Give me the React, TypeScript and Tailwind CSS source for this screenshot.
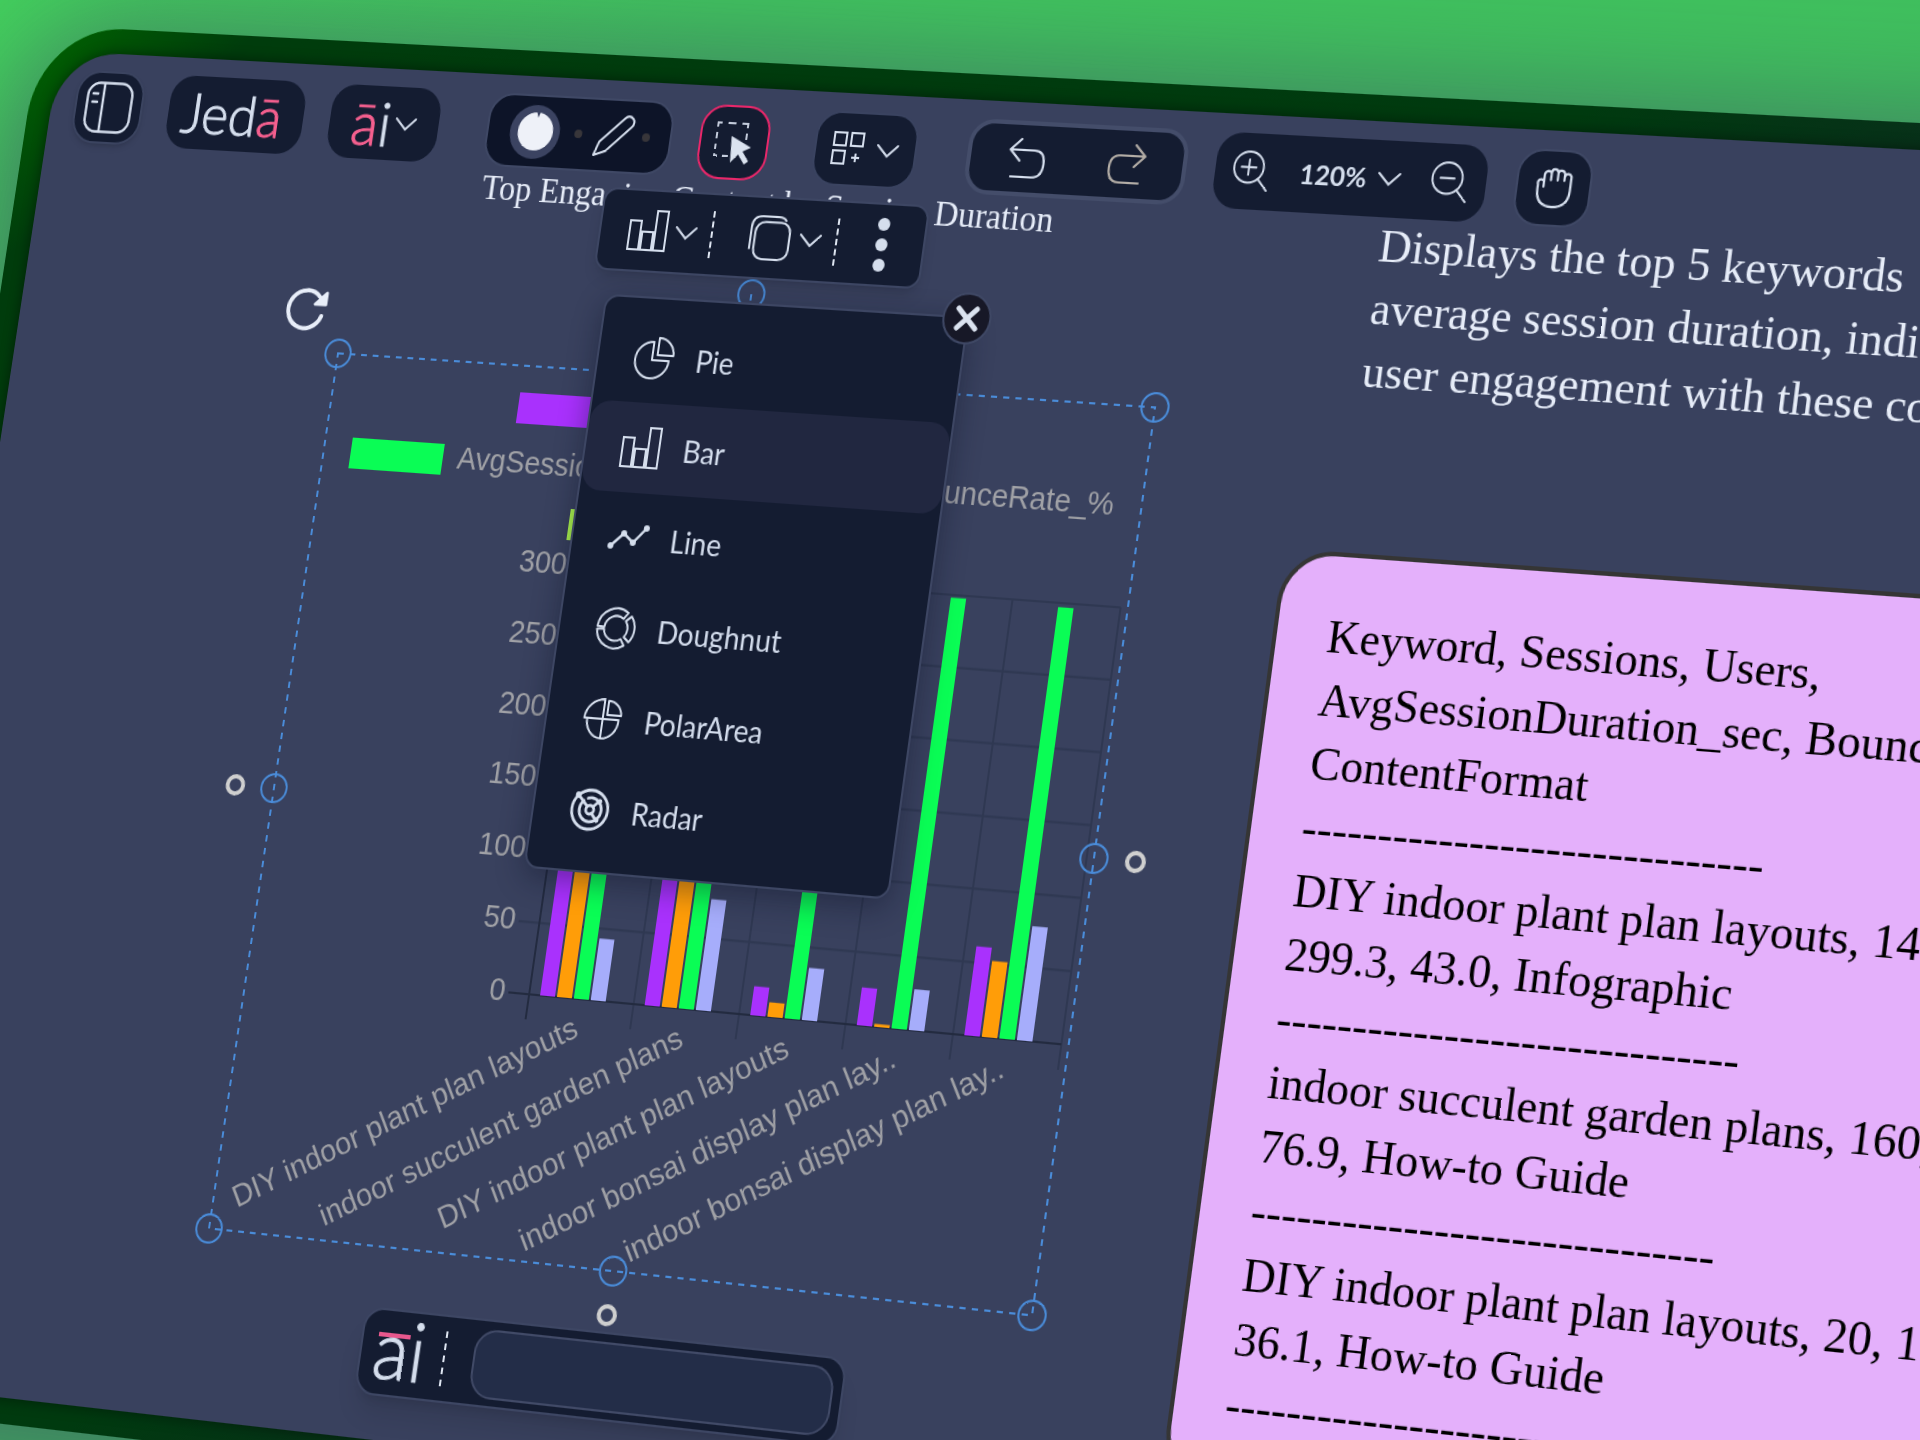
import type { ReactNode } from "react";

const SANS = "font-['Lato','Liberation_Sans',sans-serif]";
const SERIF = "font-['Liberation_Serif',serif]";
const LOGO = "leading-none font-light text-[#d5deed] [-webkit-text-stroke:1px_currentColor]";

/* ---------- icons ---------- */

function Chevron({ className = "w-[22px]" }: { className?: string }) {
  return (
    <svg viewBox="0 0 22 14" className={className} fill="none" stroke="#d5deed" strokeWidth="2" strokeLinecap="round" aria-hidden="true">
      <path d="M1 2 L11 12 L21 2" />
    </svg>
  );
}

function Icon({ children, className = "size-10", strokeWidth = 2 }: { children: ReactNode; className?: string; strokeWidth?: number }) {
  return (
    <svg viewBox="0 0 40 40" className={className} fill="none" stroke="#d5deed" strokeWidth={strokeWidth} strokeLinejoin="round" strokeLinecap="round" aria-hidden="true">
      {children}
    </svg>
  );
}

function SidebarIcon() {
  return (
    <svg viewBox="0 0 50 50" className="size-[50px]" fill="none" stroke="#d5deed" strokeWidth="2.5" strokeLinecap="round" aria-hidden="true">
      <rect x="1.5" y="1.5" width="47" height="47" rx="12" />
      <path d="M18 2 V48 M7 12 H12 M7 20 H12" />
    </svg>
  );
}

function PieIcon() {
  return (
    <Icon>
      <path d="M18 5 A17 17 0 1 0 35 22 H18 Z" />
      <path d="M23 1 A16 16 0 0 1 39 17 H23 Z" />
    </Icon>
  );
}

function BarIcon() {
  return (
    <Icon>
      <path strokeLinejoin="miter" d="M1 11 H12 V38 H1 Z M14 21 H25 V38 H14 Z M27 1 H38 V38 H27 Z" />
    </Icon>
  );
}

function LineIcon() {
  return (
    <Icon strokeWidth={2.5}>
      <path d="M3 28 L15 16 L25 24 L37 10" />
      <g fill="#d5deed" stroke="none">
        <circle cx="3" cy="28" r="3" />
        <circle cx="15" cy="16" r="3" />
        <circle cx="25" cy="24" r="3" />
        <circle cx="37" cy="10" r="3" />
      </g>
    </Icon>
  );
}

function ringSegment(from: number, to: number, cx = 20, cy = 20, outer = 18.5, inner = 11.5) {
  const at = (deg: number, r: number) => {
    const a = (deg * Math.PI) / 180;
    return `${(cx + r * Math.cos(a)).toFixed(2)} ${(cy + r * Math.sin(a)).toFixed(2)}`;
  };
  return `M${at(from, outer)} A${outer} ${outer} 0 0 1 ${at(to, outer)} L${at(to, inner)} A${inner} ${inner} 0 0 0 ${at(from, inner)} Z`;
}

function DoughnutIcon() {
  return (
    <Icon>
      <path d={ringSegment(184, 306)} />
      <path d={ringSegment(320, 400, 20.5)} />
      <path d={ringSegment(56, 175)} />
    </Icon>
  );
}

function PolarIcon() {
  return (
    <Icon>
      <path d="M20 2 A18.5 18.5 0 0 0 1.5 20 H20 Z" />
      <path d="M4.500 20 A15.500 17 0 0 0 20 38 A15.500 17 0 0 0 36 20 Z M20 20 V38" />
      <path d="M24 3 A14 14 0 0 1 38 16 H24 Z" />
    </Icon>
  );
}

function RadarIcon() {
  return (
    <Icon strokeWidth={2.8}>
      <circle cx="20" cy="20" r="18" />
      <path d="M13 12 A11 11 0 1 0 28 12 A11 11 0 0 0 17 9.500" />
      <circle cx="20" cy="20" r="4" />
      <path d="M17 17 L7 7 M23 17 L29 11 M22 23 L28 30" />
      <circle cx="7" cy="7" r="1.500" fill="#d5deed" />
      <circle cx="28" cy="29" r="1" fill="#d5deed" />
      <circle cx="29" cy="12" r="1" fill="#d5deed" />
    </Icon>
  );
}

function ShapeIcon() {
  return (
    <Icon className="size-[42px]">
      <rect x="6" y="6" width="33" height="33" rx="9" />
      <path d="M2 30 V11 Q2 1 12 1 H27 Q32 1 34 4" />
    </Icon>
  );
}

function PenIcon() {
  return (
    <Icon className="size-[42px]">
      <path d="M2 38 L6 26 L28 4 Q32 0 36 4 Q39 8 35 12 L13 34 Z" />
    </Icon>
  );
}

function SelectIcon() {
  return (
    <svg viewBox="0 0 40 40" className="size-10" fill="none" aria-hidden="true">
      <g stroke="#c3cbdb" strokeWidth="2">
        <path d="M2 6 V2 H6 M12 2 H20 M26 2 H32 V6 M32 11 V17 M2 11 V17 M2 22 V27 M2 31 V33 H5 M10 33 H16" />
      </g>
      <path d="M17 14 L38 24 L30 28 L37 37 L33 40 L26 31 L19 39 Z" fill="#dbe3f0" />
    </svg>
  );
}

function GridIcon() {
  return (
    <svg viewBox="0 0 32 32" className="size-8" fill="none" stroke="#d5deed" strokeWidth="2" aria-hidden="true">
      <path d="M1 1 H13 V13 H1 Z M18 1 H30 V13 H18 Z M1 18 H13 V30 H1 Z M24 20 V28 M20 24 H28" />
    </svg>
  );
}

function UndoIcon({ redo = false }: { redo?: boolean }) {
  return (
    <svg viewBox="0 0 38 38" className="size-[38px]" fill="none" stroke={redo ? "#b3ada6" : "#d5deed"} strokeWidth="2.200" strokeLinecap="round" strokeLinejoin="round" aria-hidden="true">
      <path
        d={
          redo
            ? "M26 1 L36 11 L26 21 M36 11 H12 Q2 11 2 23 Q2 36 13 36 H32"
            : "M12 1 L2 11 L12 21 M2 11 H26 Q36 11 36 23 Q36 36 25 36 H5"
        }
      />
    </svg>
  );
}

function ZoomIcon({ plus = false }: { plus?: boolean }) {
  return (
    <Icon className="size-[38px]">
      <circle cx="17" cy="16" r="15" />
      <path d="M27 27 L37 38" />
      <path d={plus ? "M9.500 16 H24.500 M17 8.500 V23.500" : "M10 16 H24"} />
    </Icon>
  );
}

function HandIcon() {
  return (
    <Icon strokeWidth={2.4} className="h-[38px] w-9">
      <path d="M9 19 V14 Q8 11 5 12 Q2 13 3 17 V22 Q3 39 20 39 Q37 39 37 22 V8 Q36 5 33 5 Q30 6 30 9 V12 M30 9 V5 Q29 2 26 2 Q23 2 23 5 V12 M23 5 Q23 1 19 1 Q16 1 16 5 V12 M16 5 Q15 3 12 3 Q9 4 9 7 V14" />
    </Icon>
  );
}

function DashedDivider({ className }: { className: string }) {
  return <span aria-hidden="true" className={`border-l-2 border-dashed border-[#dfe6f2] ${className}`} />;
}

/* ---------- toolbar ---------- */

const TILE = "flex h-[70px] shrink-0 items-center justify-center rounded-3xl bg-[#141c31]";

function Toolbar() {
  return (
    <header className={`absolute inset-x-0 top-0 z-10 flex gap-[50px] px-[25px] pt-[17px] ${SANS}`}>
      <div className="flex gap-7">
        <button aria-label="Toggle sidebar" className={`${TILE} w-[72px] border-2 border-[#3b4460] shadow-md`}>
          <SidebarIcon />
        </button>
        <a href="#home" className={`${TILE} w-[142px] pr-2 text-[54px] ${LOGO}`}>
          <span>
            Jed<span className="text-[#f5608f]">ā</span>
          </span>
        </a>
        <button aria-label="AI menu" className={`${TILE} w-[113px] gap-1 text-[58px] ${LOGO}`}>
          <span>
            <span className="text-[#f5608f]">ā</span>i
          </span>
          <Chevron />
        </button>
      </div>

      <div className="flex gap-7">
        <div className="flex h-[70px] w-[189px] items-center justify-between rounded-3xl border-2 border-[#3f4865] bg-[#0d1428] pr-5 pl-[22px]">
          <button aria-label="Colour" className="flex size-[51px] items-center justify-center rounded-full bg-[#3b4361]">
            <svg viewBox="0 0 36 36" className="size-9" aria-hidden="true">
              <circle cx="18" cy="18" r="18" fill="#eef1f8" />
              <path d="M17 -1 H21 L19 5 Z" fill="#3b4361" />
            </svg>
          </button>
          <span className="ml-2 size-2 rounded-full bg-[#38363a]" />
          <button aria-label="Pen" className="ml-1">
            <PenIcon />
          </button>
          <span className="size-2 rounded-full bg-[#38363a]" />
        </div>
        <button aria-label="Select" className={`${TILE} w-[70px] border-2 border-[#e9276a]`}>
          <SelectIcon />
        </button>
      </div>

      <button aria-label="Widgets" className={`${TILE} -ml-1 w-[102px] gap-3 border-2 border-[#3a4360]`}>
        <GridIcon />
        <Chevron />
      </button>

      <div className="flex gap-7">
        <div className={`${TILE} w-[215px] gap-[60px] border-4 border-[#444d6a]`}>
          <button aria-label="Undo">
            <UndoIcon />
          </button>
          <button aria-label="Redo">
            <UndoIcon redo />
          </button>
        </div>
        <div className={`${TILE} w-[259px] gap-7`}>
          <button aria-label="Zoom in">
            <ZoomIcon plus />
          </button>
          <button className="flex items-center gap-[10px] text-[25px] font-bold text-[#d5deed]">
            120%
            <Chevron />
          </button>
          <button aria-label="Zoom out">
            <ZoomIcon />
          </button>
        </div>
        <button aria-label="Pan" className={`${TILE} w-[71px] border-2 border-[#3f4865]`}>
          <HandIcon />
        </button>
      </div>
    </header>
  );
}

/* ---------- chart ---------- */

const PURPLE = "#a931fd";
const ORANGE = "#ff9d08";
const GREEN = "#0afd55";
const LAVENDER = "#a6adfb";
const LIME = "#b0fb4e";

const ZERO_Y = 578;
const UNIT = 1.317;
const PLOT_LEFT = 288;
const PLOT_RIGHT = 813;
const STEP = 105;

const series = [
  { label: "DIY indoor plant plan layouts", values: [140, 120, 299, 43] },
  { label: "indoor succulent garden plans", values: [160, 140, 299, 77] },
  { label: "DIY indoor plant plan layouts", values: [20, 10, 297, 36] },
  { label: "indoor bonsai display plan lay..", values: [26, 2, 298, 28] },
  { label: "indoor bonsai display plan lay..", values: [61, 52, 297, 78] },
];

const legend = [
  { x: 192, y: 25, color: PURPLE, text: "Sessions" },
  { x: 438, y: 25, color: ORANGE, text: "Users" },
  { x: 28, y: 78, color: GREEN, text: "AvgSessionDuration_sec" },
  { x: 482, y: 78, color: LAVENDER, text: "BounceRate_%" },
  { x: 260, y: 130, color: LIME, text: "ContentFormat" },
];

function Chart() {
  return (
    <svg viewBox="0 0 820 820" className="block w-full overflow-visible font-['Liberation_Sans',sans-serif]" role="img" aria-label="Bar chart of keyword sessions">
      {legend.map((l) => (
        <g key={l.text}>
          <rect x={l.x} y={l.y} width="95" height="29" fill={l.color} />
          <text x={l.x + 110} y={l.y + 22} fontSize="29" fill="#a0a1a6">
            {l.text}
          </text>
        </g>
      ))}

      <g stroke="#2f3852" strokeWidth="2">
        {[50, 100, 150, 200, 250, 300].map((v) => (
          <path key={v} d={`M267 ${ZERO_Y - v * UNIT} H${PLOT_RIGHT}`} />
        ))}
        {[1, 2, 3, 4, 5].map((i) => (
          <path key={i} d={`M${PLOT_LEFT + i * STEP} 183 V601`} />
        ))}
      </g>
      <g stroke="#232b40" strokeWidth="2">
        <path d={`M267 ${ZERO_Y} H${PLOT_RIGHT}`} />
        <path d={`M${PLOT_LEFT} 183 V601`} />
      </g>

      {[0, 50, 100, 150, 200, 250, 300].map((v) => (
        <text key={v} x="264" y={ZERO_Y - v * UNIT + 8} textAnchor="end" fontSize="29" fill="#a0a1a6">
          {v}
        </text>
      ))}

      {series.map((s, i) => (
        <g key={i}>
          {s.values.map((v, j) => (
            <rect
              key={j}
              x={PLOT_LEFT + i * STEP + 11 + j * 17}
              y={ZERO_Y - v * UNIT}
              width="15"
              height={v * UNIT}
              fill={[PURPLE, ORANGE, GREEN, LAVENDER][j]}
            />
          ))}
          <text
            transform={`translate(${PLOT_LEFT + i * STEP + 56} 611) rotate(-30.5)`}
            textAnchor="end"
            fontSize="29"
            fill="#a0a1a6"
          >
            {s.label}
          </text>
        </g>
      ))}
    </svg>
  );
}

function SelectionFrame() {
  const handles = [
    [0, 0],
    [820, 0],
    [820, 410],
    [820, 820],
    [410, 820],
    [0, 820],
    [0, 410],
    [410, -80],
  ];
  return (
    <svg viewBox="0 0 820 820" className="pointer-events-none absolute inset-0 overflow-visible" fill="none" aria-hidden="true">
      <g stroke="#4a8cd9" strokeWidth="2">
        <rect x="0" y="0" width="820" height="820" strokeDasharray="6 6" />
        <path d="M410 -80 V0" strokeDasharray="6 6" />
        {handles.map(([x, y]) => (
          <circle key={`${x}-${y}`} cx={x} cy={y} r="13" />
        ))}
      </g>
      <g stroke="#cfcfcf" strokeWidth="4">
        <circle cx="-40" cy="410" r="8" />
        <circle cx="860" cy="410" r="8" />
        <circle cx="410" cy="860" r="8" />
      </g>
      <path d="M-23 -34 A18 18 0 1 1 -27 -52" stroke="#e8eef9" strokeWidth="4" strokeLinecap="round" />
      <path d="M-20 -56 V-45 H-31 Z" fill="#e8eef9" stroke="#e8eef9" strokeWidth="3" strokeLinejoin="round" />
    </svg>
  );
}

/* ---------- floating chart-type menu ---------- */

const chartTypes = [
  { name: "Pie", icon: <PieIcon /> },
  { name: "Bar", icon: <BarIcon /> },
  { name: "Line", icon: <LineIcon /> },
  { name: "Doughnut", icon: <DoughnutIcon /> },
  { name: "PolarArea", icon: <PolarIcon /> },
  { name: "Radar", icon: <RadarIcon /> },
];

function ContextToolbar() {
  return (
    <div className="absolute top-[100px] left-[587px] z-20 flex h-[78px] w-[327px] items-center rounded-[14px] border-2 border-[#3d4663] bg-[#141c31] pl-[28px] shadow-lg">
      <button aria-label="Chart type" className="flex items-center gap-[7px]">
        <BarIcon />
        <Chevron />
      </button>
      <DashedDivider className="ml-[14px] h-11" />
      <button aria-label="Shape style" className="ml-9 flex items-center gap-[9px]">
        <ShapeIcon />
        <Chevron />
      </button>
      <DashedDivider className="ml-[14px] h-11" />
      <button aria-label="More" className="ml-[38px] flex flex-col gap-[7px]">
        <span className="size-3 rounded-full bg-[#d5deed]" />
        <span className="size-3 rounded-full bg-[#d5deed]" />
        <span className="size-3 rounded-full bg-[#d5deed]" />
      </button>
    </div>
  );
}

function ChartTypeMenu() {
  return (
    <div className={`absolute top-[200px] left-[603px] z-20 w-[364px] rounded-[14px] border-2 border-[#3d4663] bg-[#141c31] pt-[13px] pb-[14px] shadow-[0_8px_28px_rgba(10,15,35,0.4)] ${SANS}`}>
      <ul>
        {chartTypes.map((t) => (
          <li key={t.name}>
            <button
              className={`flex h-[84px] w-full items-center gap-[22px] rounded-[20px] pl-9 text-[28px] text-[#d3dcec] ${
                t.name === "Bar" ? "bg-[#212740]" : ""
              }`}
            >
              {t.icon}
              {t.name}
            </button>
          </li>
        ))}
      </ul>
      <button aria-label="Close" className="absolute -top-6 -right-6 flex size-12 items-center justify-center rounded-full border-2 border-[#3f4865] bg-[#171827]">
        <svg viewBox="0 0 24 24" className="size-6" stroke="#dbe3f0" strokeWidth="5" strokeLinecap="round" aria-hidden="true">
          <path d="M3 3 L21 21 M21 3 L3 21" />
        </svg>
      </button>
    </div>
  );
}

/* ---------- notes ---------- */

const noteLines = [
  "Keyword, Sessions, Users,",
  "AvgSessionDuration_sec, BounceRate_%,",
  "ContentFormat",
  "------------------------------",
  "DIY indoor plant plan layouts, 140, 120,",
  "299.3, 43.0, Infographic",
  "------------------------------",
  "indoor succulent garden plans, 160, 140,",
  "76.9, How-to Guide",
  "------------------------------",
  "DIY indoor plant plan layouts, 20, 10,",
  "36.1, How-to Guide",
  "------------------------------",
];

function Notes() {
  return (
    <div className={`absolute top-[84px] left-[1300px] flex w-[900px] flex-col text-[43px] leading-[57px] whitespace-nowrap ${SERIF}`}>
      <div className="pl-[52px] text-[#e6ecf8]">
        <p>Displays the top 5 keywords</p>
        <p>average session duration, indicating</p>
        <p>user engagement with these content</p>
      </div>
      <article className="mt-[136px] rounded-[50px] border-4 border-[#353535] bg-[#e4b0fb] px-12 py-[43px] text-black">
        {noteLines.map((line, i) => (
          <p key={i}>{line}</p>
        ))}
      </article>
    </div>
  );
}

function PromptBar() {
  return (
    <form className={`absolute top-[1147px] left-[509px] z-10 flex h-20 w-[480px] items-center rounded-[20px] border-2 border-[#3d4663] bg-[#141c31] pr-2 pl-3 shadow-xl ${SANS}`}>
      <label htmlFor="prompt" className={`relative pb-2 text-[74px] ${LOGO}`}>
        ai
        <span className="absolute top-[23px] left-[3px] h-1 w-8 bg-[#e8588d]" />
      </label>
      <DashedDivider className="ml-[18px] h-[50px]" />
      <input id="prompt" aria-label="Prompt" className="ml-7 h-[63px] min-w-0 flex-1 rounded-[22px] border-2 border-[#414a67] bg-[#232d48] px-5 text-2xl text-[#d5deed]" />
    </form>
  );
}

/* ---------- page ---------- */

export default function App() {
  return (
    <main className="h-screen w-full overflow-hidden bg-[radial-gradient(circle_at_top_left,#42cf5c,#3fc45d_30%,#3fbf5d)]">
      <div className="w-[125%] origin-top-left rounded-[88px] bg-[linear-gradient(135deg,#006400_0,#003c0c_160px,#003a0f_1100px,#0c2a20_1500px)] p-6 shadow-[0_20px_110px_20px_rgba(62,70,100,0.6)] [transform:matrix3d(0.92819,0.047462,0,-0.00004201,-0.15733,1.02769,0,-0.000014992,0,0,1,0,41,25,0,1)]">
        <div className="relative min-h-[1267px] overflow-hidden rounded-[64px] bg-[#39415e] shadow-[0_0_14px_rgba(0,0,0,0.45)]">
          <h1 className={`absolute top-[88px] left-[462px] text-[33px] leading-[38px] whitespace-nowrap text-[#e6ecf8] ${SERIF}`}>
            Top Engaging Content by Session Duration
          </h1>
          <section className="absolute top-[272px] left-[339px] w-[820px]">
            <Chart />
            <SelectionFrame />
          </section>
          <Notes />
          <ContextToolbar />
          <ChartTypeMenu />
          <PromptBar />
          <Toolbar />
        </div>
      </div>
    </main>
  );
}
